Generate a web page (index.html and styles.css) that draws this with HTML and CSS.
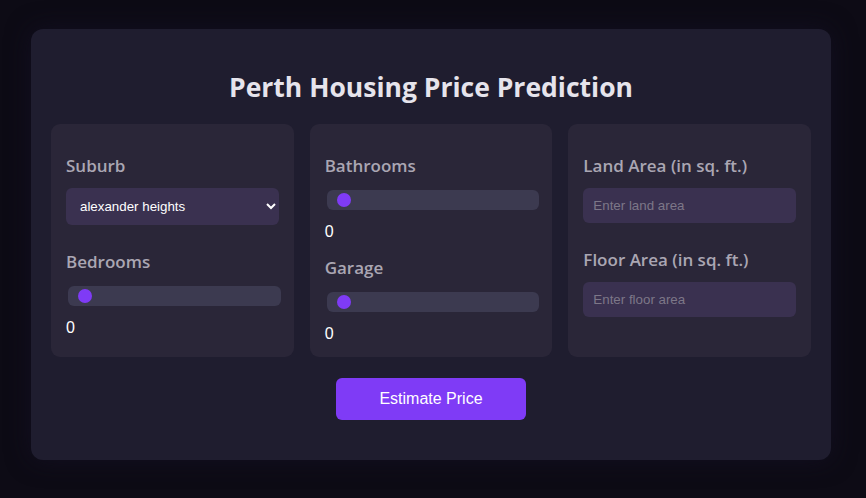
FILE: index.html
```html
<!DOCTYPE html>
<html lang="en">
<head>
<meta charset="utf-8">
<title>Perth Housing Price Prediction</title>
<link rel="stylesheet" href="styles.css">
</head>
<body>
<main class="card">
  <h1 class="title">Perth Housing Price Prediction</h1>
  <div class="panels">
    <section class="panel">
      <div class="group">
        <label class="field-label" for="suburb">Suburb</label>
        <select id="suburb" class="select">
          <option>alexander heights</option>
        </select>
      </div>
      <div class="group group-range">
        <label class="field-label" for="bedrooms">Bedrooms</label>
        <input id="bedrooms" class="range" type="range" min="0" max="10" value="0">
        <div class="value">0</div>
      </div>
    </section>
    <section class="panel">
      <div class="group group-range">
        <label class="field-label" for="bathrooms">Bathrooms</label>
        <input id="bathrooms" class="range" type="range" min="0" max="10" value="0">
        <div class="value">0</div>
      </div>
      <div class="group group-range">
        <label class="field-label" for="garage">Garage</label>
        <input id="garage" class="range" type="range" min="0" max="10" value="0">
        <div class="value">0</div>
      </div>
    </section>
    <section class="panel">
      <div class="group">
        <label class="field-label" for="land">Land Area (in sq. ft.)</label>
        <input id="land" class="text-input" type="text" placeholder="Enter land area">
      </div>
      <div class="group">
        <label class="field-label" for="floor">Floor Area (in sq. ft.)</label>
        <input id="floor" class="text-input" type="text" placeholder="Enter floor area">
      </div>
    </section>
  </div>
  <button class="estimate" type="button">Estimate Price</button>
</main>
</body>
</html>
```
FILE: styles.css
```css
html, body {
  margin: 0;
  background: #0d0b15;
}
body {
  padding: 29px 0 0 31px;
  min-height: 469px;
  font-family: "Open Sans", "Noto Sans", sans-serif;
}
.card {
  width: 800px;
  box-sizing: border-box;
  padding: 40px 20px 40px;
  background: #1f1d2f;
  border-radius: 12px;
  box-shadow: 0 0 24px rgba(20, 16, 36, 0.8);
}
.title {
  margin: 0 0 18px;
  text-align: center;
  font-size: 26.5px;
  line-height: 37px;
  font-weight: 700;
  color: #e6e4ec;
}
.panels {
  display: grid;
  grid-template-columns: repeat(3, 1fr);
  gap: 16px;
}
.panel {
  background: #2a2638;
  border-radius: 9px;
  padding: 30px 15px 14px;
  display: flex;
  flex-direction: column;
}
.group {
  display: flex;
  flex-direction: column;
}
.group + .group {
  margin-top: 25px;
}
.group-range + .group {
  margin-top: 15px;
}
.field-label {
  font-size: 17px;
  line-height: 24px;
  font-weight: 600;
  color: #aaa6b3;
  margin-bottom: 10px;
}
.select {
  height: 37px;
  margin: 0;
  padding: 0 8px 0 10px;
  border: none;
  border-radius: 6px;
  background: #3a3150;
  color: #ffffff;
  font-family: "Liberation Sans", Arial, sans-serif;
  font-size: 13.33px;
  color-scheme: dark;
  outline: none;
}
.text-input {
  height: 35px;
  box-sizing: border-box;
  margin: 0;
  padding: 0 10px;
  border: none;
  border-radius: 6px;
  background: #3a3150;
  color: #ffffff;
  font-family: "Liberation Sans", Arial, sans-serif;
  font-size: 13.33px;
  outline: none;
}
.text-input::placeholder {
  color: #7d7788;
}
.range {
  -webkit-appearance: none;
  appearance: none;
  width: 100%;
  height: 20px;
  box-sizing: border-box;
  margin: 2px 0 2px 2px;
  padding: 0 10px;
  background: #3c3a50;
  border-radius: 6px;
  outline: none;
}
.range::-webkit-slider-runnable-track {
  height: 20px;
  background: transparent;
}
.range::-webkit-slider-thumb {
  -webkit-appearance: none;
  appearance: none;
  width: 14px;
  height: 14px;
  margin-top: 3px;
  border-radius: 50%;
  background: #7f3bf6;
  border: none;
}
.value {
  margin-top: 11px;
  font-family: "Liberation Sans", Arial, sans-serif;
  font-size: 16px;
  line-height: 18px;
  color: #ffffff;
}
.estimate {
  display: block;
  width: 190px;
  height: 42px;
  margin: 21px auto 0;
  border: none;
  border-radius: 6px;
  background: #7f3bf6;
  color: #ffffff;
  font-family: "Liberation Sans", Arial, sans-serif;
  font-size: 16px;
}
```
